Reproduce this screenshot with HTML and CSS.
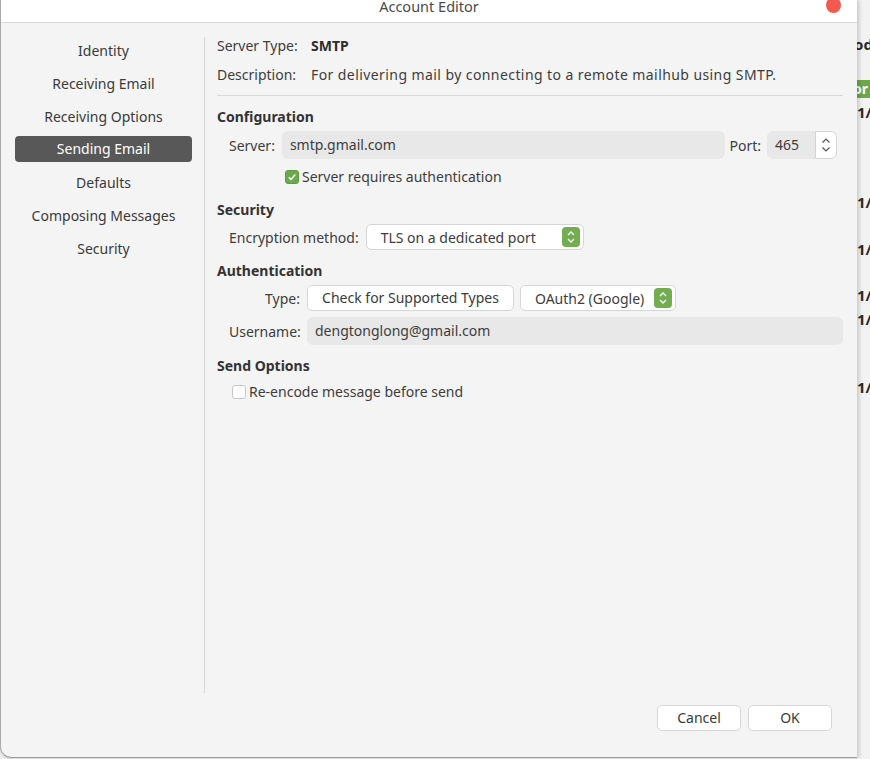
FILE: index.html
```html
<!DOCTYPE html>
<html>
<head>
<meta charset="utf-8">
<link rel="stylesheet" href="styles.css">
</head>
<body>
<div class="screen">
  <div class="dialog">
    <div class="titlebar">
      <span class="title">Account Editor</span>
      <span class="close"></span>
    </div>
    <div class="content">
      <nav class="sidebar">
        <div class="nav-item">Identity</div>
        <div class="nav-item">Receiving Email</div>
        <div class="nav-item">Receiving Options</div>
        <div class="nav-item active">Sending Email</div>
        <div class="nav-item">Defaults</div>
        <div class="nav-item">Composing Messages</div>
        <div class="nav-item">Security</div>
      </nav>
      <main class="main">
        <div class="info-row"><span class="info-label">Server Type:</span><span class="strong">SMTP</span></div>
        <div class="info-row r2"><span class="info-label">Description:</span><span class="desc">For delivering mail by connecting to a remote mailhub using SMTP.</span></div>
        <div class="hr"></div>

        <div class="heading h-config">Configuration</div>
        <div class="row server-row">
          <span class="lbl">Server:</span>
          <div class="entry grow">smtp.gmail.com</div>
          <span class="lbl port-lbl">Port:</span>
          <div class="spin">
            <span class="spin-val">465</span>
            <span class="spin-btn">
              <svg width="10" height="16" viewBox="0 0 10 16"><path d="M1.5 5.5 L5 2 L8.5 5.5 M1.5 10.5 L5 14 L8.5 10.5" fill="none" stroke="#555" stroke-width="1.2"/></svg>
            </span>
          </div>
        </div>
        <div class="row check-row">
          <span class="check on">
            <svg width="10" height="10" viewBox="0 0 10 10"><path d="M1.8 5.2 L4 7.4 L8.3 2.6" fill="none" stroke="#fff" stroke-width="1.5"/></svg>
          </span>
          <span>Server requires authentication</span>
        </div>

        <div class="heading h-sec">Security</div>
        <div class="row enc-row">
          <span class="lbl">Encryption method:</span>
          <div class="combo enc-combo">
            <span>TLS on a dedicated port</span>
            <span class="combo-btn"><svg width="10" height="14" viewBox="0 0 10 14"><path d="M2 5 L5 2 L8 5 M2 9 L5 12 L8 9" fill="none" stroke="#fff" stroke-width="1.3"/></svg></span>
          </div>
        </div>

        <div class="heading h-auth">Authentication</div>
        <div class="auth-grid">
          <span class="alabel">Type:</span>
          <div class="ctrls">
            <div class="button check-btn">Check for Supported Types</div>
            <div class="combo oauth-combo">
              <span>OAuth2 (Google)</span>
              <span class="combo-btn"><svg width="10" height="14" viewBox="0 0 10 14"><path d="M2 5 L5 2 L8 5 M2 9 L5 12 L8 9" fill="none" stroke="#fff" stroke-width="1.3"/></svg></span>
            </div>
          </div>
          <span class="alabel user-lbl">Username:</span>
          <div class="entry user-entry">dengtonglong@gmail.com</div>
        </div>

        <div class="heading h-send">Send Options</div>
        <div class="row check-row2">
          <span class="check off"></span>
          <span>Re-encode message before send</span>
        </div>
      </main>
    </div>
    <div class="footer">
      <div class="button footer-btn">Cancel</div>
      <div class="button footer-btn">OK</div>
    </div>
  </div>
  <div class="behind">
    <div class="b-txt b1">od</div>
    <div class="b-green">or</div>
    <div class="b-txt b3">1/</div>
    <div class="b-txt b4">1/</div>
    <div class="b-txt b5">1/</div>
    <div class="b-txt b6">1/</div>
    <div class="b-txt b7">1/</div>
    <div class="b-txt b8">1/</div>
  </div>
</div>
</body>
</html>
```

FILE: styles.css
```css
* { box-sizing: border-box; }
html, body { margin: 0; padding: 0; }
body {
  width: 870px;
  height: 759px;
  overflow: hidden;
  background: #ececec;
  font-family: "Noto Sans", "Open Sans", sans-serif;
  font-size: 14px;
  color: #3d3d3d;
}
.screen { display: flex; height: 759px; }

.dialog {
  width: 857px;
  height: 758px;
  background: #f4f4f4;
  border-left: 1px solid #a9a9a9;
  border-bottom: 1px solid #9d9d9d;
  border-bottom-left-radius: 11px;
  display: flex;
  flex-direction: column;
  position: relative;
  z-index: 1;
  box-shadow: 2px 0 4px rgba(0,0,0,0.18);
}
.titlebar {
  height: 23px;
  background: #ffffff;
  border-bottom: 1px solid #dadada;
  display: flex;
  justify-content: center;
  align-items: flex-start;
  position: relative;
}
.title {
  font-size: 14.5px;
  line-height: 12px;
  color: #4a4a4a;
}
.close {
  position: absolute;
  left: 825px;
  top: -3px;
  width: 15px;
  height: 16px;
  border-radius: 50%;
  background: #f25a50;
}

.content {
  display: flex;
  padding-top: 14px;
  height: 670px;
}
.sidebar {
  width: 204px;
  border-right: 1px solid #d6d6d6;
  padding: 1px 12px 0 14px;
  display: flex;
  flex-direction: column;
  gap: 7px;
}
.nav-item {
  height: 26px;
  line-height: 26px;
  text-align: center;
  border-radius: 4px;
  color: #3a3a3a;
  white-space: nowrap;
}
.nav-item.active {
  background: #585858;
  color: #ffffff;
  margin-top: -1px;
  margin-bottom: 1px;
}

.main {
  flex: 1;
  padding: 0 14px 0 12px;
  display: flex;
  flex-direction: column;
}
.info-row {
  display: flex;
  height: 17px;
  line-height: 17px;
  white-space: nowrap;
}
.info-row.r2 { margin-top: 12px; }
.info-label { width: 94px; }
.desc { letter-spacing: 0.42px; }
.strong { font-weight: bold; color: #2e2e2e; }
.hr {
  height: 1px;
  background: #d9d9d9;
  margin-top: 12px;
}
.heading {
  font-weight: bold;
  height: 16px;
  line-height: 16px;
  color: #333;
}
.h-config { margin-top: 13px; }
.h-sec { margin-top: 17px; }
.h-auth { margin-top: 13px; }
.h-send { margin-top: 13px; }

.row {
  display: flex;
  align-items: center;
  white-space: nowrap;
}
.lbl { margin-right: 7px; }
.server-row { margin-top: 6px; height: 28px; padding-left: 12px; }
.grow { flex: 1; }
.entry {
  height: 28px;
  line-height: 28px;
  background: #e8e8e8;
  border-radius: 6px;
  padding-left: 8px;
  color: #3d3d3d;
}
.port-lbl { margin-left: 4px; margin-right: 6px; }
.spin {
  width: 70px;
  height: 28px;
  display: flex;
  margin-right: 6px;
}
.spin-val {
  flex: 1;
  background: #e8e8e8;
  border-radius: 6px 0 0 6px;
  line-height: 28px;
  padding-left: 8px;
}
.spin-btn {
  width: 22px;
  background: #ffffff;
  border: 1px solid #d4d4d4;
  border-radius: 0 6px 6px 0;
  display: flex;
  align-items: center;
  justify-content: center;
}
.check-row { margin-top: 9px; height: 17px; padding-left: 68px; }
.check {
  width: 14px;
  height: 14px;
  border-radius: 3px;
  margin-right: 3px;
  display: flex;
  align-items: center;
  justify-content: center;
}
.check.on { background: #6aaa4d; border: 1px solid #5e9a43; }
.check.off { background: #ffffff; border: 1px solid #c6c6c6; }

.enc-row { margin-top: 6px; height: 26px; padding-left: 12px; }
.combo {
  height: 26px;
  background: #ffffff;
  border: 1px solid #d6d6d6;
  border-radius: 5px;
  display: flex;
  align-items: center;
  justify-content: space-between;
  padding: 0 3px 0 14px;
}
.enc-combo { width: 218px; }
.combo-btn {
  width: 18px;
  height: 20px;
  background: #72ad52;
  border-radius: 4px;
  display: flex;
  align-items: center;
  justify-content: center;
}

.auth-grid {
  display: grid;
  grid-template-columns: 71px 1fr;
  column-gap: 7px;
  row-gap: 6px;
  margin-top: 6px;
  padding-left: 12px;
  align-items: center;
  white-space: nowrap;
}
.alabel { text-align: right; }
.ctrls { display: flex; gap: 6px; }
.button {
  height: 26px;
  line-height: 24px;
  background: #ffffff;
  border: 1px solid #d6d6d6;
  border-radius: 5px;
  text-align: center;
  color: #3a3a3a;
}
.check-btn { width: 207px; }
.oauth-combo { width: 156px; }
.user-entry { height: 28px; }

.check-row2 { margin-top: 9px; height: 17px; padding-left: 15px; }

.footer {
  display: flex;
  justify-content: flex-end;
  gap: 7px;
  padding: 12px 25px 0 0;
}
.footer-btn { width: 84px; }

.behind {
  flex: 1;
  position: relative;
  background: #f2f2f2;
  overflow: hidden;
}
.b-txt {
  position: absolute;
  left: 0;
  font-weight: bold;
  font-size: 15px;
  color: #2a2a2a;
  line-height: 17px;
}
.b1 { top: 36px; left: -3px; }
.b3 { top: 104px; }
.b4 { top: 194px; }
.b5 { top: 241px; }
.b6 { top: 287px; }
.b7 { top: 311px; }
.b8 { top: 379px; }
.b-green {
  position: absolute;
  top: 80px;
  left: 0;
  width: 13px;
  height: 18px;
  background: #6da84a;
  color: #fff;
  font-weight: bold;
  font-size: 14px;
  line-height: 18px;
  overflow: hidden;
  text-indent: -4px;
}
```
